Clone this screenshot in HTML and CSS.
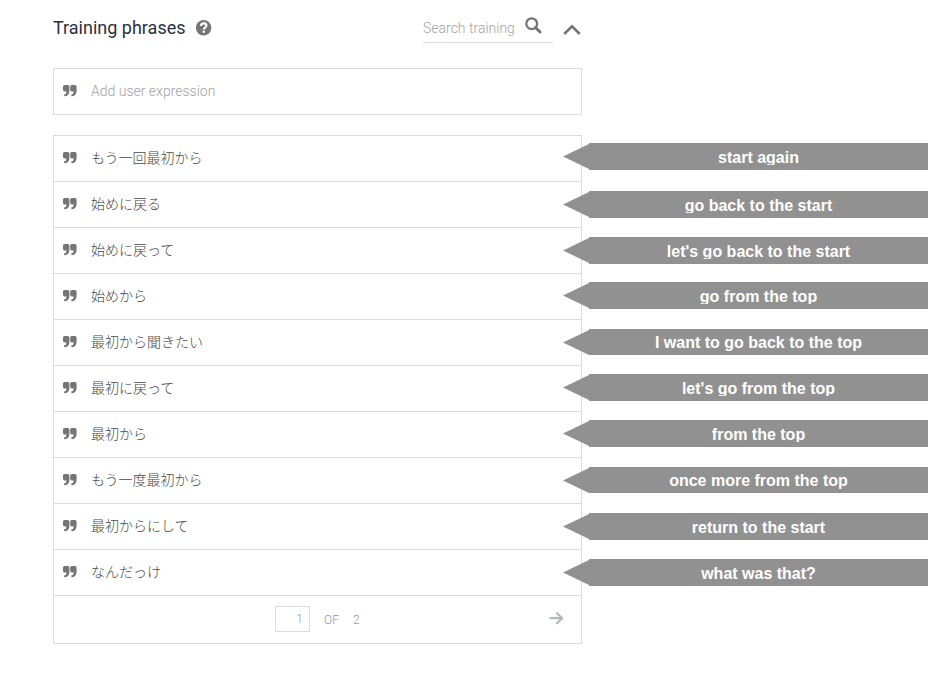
FILE: index.html
```html
<!DOCTYPE html>
<html lang="ja">
<head>
<meta charset="utf-8">
<title>Training phrases</title>
<link rel="stylesheet" href="styles.css">
</head>
<body>
<svg class="defs" width="0" height="0">
  <symbol id="quote" viewBox="0 0 14 12">
    <path d="M1.5 0H4.7Q6.4 0 6.4 1.8V5.5Q6.4 11.3 1.2 11.3V9.2Q3.5 9 3.6 6.4H1.5Q0 6.4 0 4.8V1.5Q0 0 1.5 0ZM8.7 0H11.9Q13.6 0 13.6 1.8V5.5Q13.6 11.3 8.4 11.3V9.2Q10.7 9 10.8 6.4H8.7Q7.2 6.4 7.2 4.8V1.5Q7.2 0 8.7 0Z"/>
  </symbol>
</svg>
<main class="panel">
  <header class="head">
    <h1 class="title">Training phrases</h1>
    <svg class="help" width="16" height="16" viewBox="0 0 16 16"><circle cx="7.6" cy="7.7" r="7.7" fill="#757575"/><path d="M4.9 6C5 4.2 6.1 3.4 7.7 3.4S10.4 4.3 10.4 5.7C10.4 7.5 7.8 7.5 7.8 9.5" fill="none" stroke="#fff" stroke-width="2.1"/><rect x="6.7" y="10.6" width="2.2" height="2.2" fill="#fff"/></svg>
    <div class="search">
      <span class="search-text">Search training</span>
      <svg class="glass" width="17" height="17" viewBox="0 0 17 17" fill="none" stroke="#757575"><circle cx="6.7" cy="6.7" r="5.4" stroke-width="2.3"/><path d="M10.6 10.6L15 15" stroke-width="2.9" stroke-linecap="round"/></svg>
    </div>
    <svg class="chevron" width="18" height="12" viewBox="0 0 18 12"><path d="M1.2 10L9 2.3L16.8 10" fill="none" stroke="#757575" stroke-width="2.5"/></svg>
  </header>
  <div class="add"><svg class="quote"><use href="#quote"/></svg><span>Add user expression</span></div>
  <section class="list">
    <div class="row"><svg class="quote"><use href="#quote"/></svg><span>もう一回最初から</span><div class="tag up"><span class="note">start again</span></div></div>
    <div class="row"><svg class="quote"><use href="#quote"/></svg><span>始めに戻る</span><div class="tag"><span class="note">go back to the start</span></div></div>
    <div class="row"><svg class="quote"><use href="#quote"/></svg><span>始めに戻って</span><div class="tag"><span class="note">let's go back to the start</span></div></div>
    <div class="row"><svg class="quote"><use href="#quote"/></svg><span>始めから</span><div class="tag mid"><span class="note">go from the top</span></div></div>
    <div class="row"><svg class="quote"><use href="#quote"/></svg><span>最初から聞きたい</span><div class="tag slim"><span class="note">I want to go back to the top</span></div></div>
    <div class="row"><svg class="quote"><use href="#quote"/></svg><span>最初に戻って</span><div class="tag mid"><span class="note">let's go from the top</span></div></div>
    <div class="row"><svg class="quote"><use href="#quote"/></svg><span>最初から</span><div class="tag mid"><span class="note">from the top</span></div></div>
    <div class="row"><svg class="quote"><use href="#quote"/></svg><span>もう一度最初から</span><div class="tag slim"><span class="note">once more from the top</span></div></div>
    <div class="row"><svg class="quote"><use href="#quote"/></svg><span>最初からにして</span><div class="tag"><span class="note">return to the start</span></div></div>
    <div class="row"><svg class="quote"><use href="#quote"/></svg><span>なんだっけ</span><div class="tag"><span class="note">what was that?</span></div></div>
    <footer class="pager">
      <span class="page">1</span><span class="of">OF</span><span class="total">2</span>
      <svg class="next" width="15" height="13" viewBox="0 0 15 13"><path d="M1.2 6.2H13M8 1.2L13.2 6.2L8 11.2" fill="none" stroke="#b4b7bf" stroke-width="2.2" stroke-linecap="round"/></svg>
    </footer>
  </section>
</main>
</body>
</html>
```

FILE: styles.css
```css
* { box-sizing: border-box; }

body {
  margin: 0;
  background: #fff;
  overflow: hidden;
  font-family: Roboto, "Noto Sans CJK JP", sans-serif;
  font-size: 14px;
}

svg { display: block; flex: none; }
.defs { position: absolute; }

.panel { width: 529px; margin-left: 53px; }

.head {
  display: flex;
  height: 68px;
  padding-top: 14px;
}

.title {
  width: 143px;
  margin: 0;
  font-size: 18px;
  font-weight: 400;
  line-height: 28px;
  white-space: nowrap;
  color: #2b303f;
}

.help { margin-top: 6px; }

.search {
  display: flex;
  width: 130px;
  height: 29px;
  margin-left: 211px;
  border-bottom: 1px solid #dcdcdc;
}

.search-text {
  width: 102px;
  line-height: 28px;
  font-weight: 300;
  white-space: nowrap;
  color: #a3a3a3;
}

.glass { margin-top: 3px; }
.chevron { margin: 10px 0 0 10px; }

.add,
.row {
  display: flex;
  align-items: center;
  padding-left: 10px;
  border: 1px solid #dcdcdc;
}

.add {
  height: 47px;
  padding-bottom: 2px;
  font-weight: 300;
  color: #a3a3a3;
}

.quote {
  width: 14px;
  height: 12px;
  margin-right: 14px;
  fill: #757575;
}

.add .quote,
.row .quote { margin-left: -1px; }

.list {
  margin-top: 20px;
  border: 1px solid #dcdcdc;
}

.row {
  position: relative;
  height: 46px;
  padding-bottom: 1px;
  border-width: 0 0 1px;
  font-family: "Noto Sans CJK JP", sans-serif;
  font-weight: 300;
  color: #484848;
}

.row > span { margin-bottom: 2px; }

.tag {
  position: absolute;
  top: 9px;
  left: 535px;
  width: 339px;
  height: 27px;
  background: #919191;
  color: #fff;
  font: bold 16px/20px "Liberation Sans", Arial, sans-serif;
  text-align: center;
}

.tag::before {
  content: "";
  position: absolute;
  top: 1px;
  left: -26px;
  width: 26px;
  height: 25px;
  background: #919191;
  clip-path: polygon(0 50%, 100% 0, 100% 100%);
}

.tag.up { top: 7px; }
.tag.mid { top: 8px; }
.tag.slim { height: 26px; }

.note {
  display: block;
  height: 17px;
  margin-top: 5px;
  overflow: hidden;
}

.slim .note { margin-top: 4px; height: 18px; }

.pager {
  display: flex;
  height: 47px;
  padding-top: 10px;
  font-size: 12px;
  font-weight: 300;
  color: #9498a3;
}

.page {
  width: 35px;
  height: 26px;
  margin-left: 221px;
  padding-right: 6px;
  border: 1px solid #dcdcdc;
  line-height: 24px;
  text-align: right;
}

.of,
.total { line-height: 28px; }
.of { width: 29px; margin-left: 14px; }
.total { width: 20px; }
.next { margin: 6px 0 0 176px; }
```
